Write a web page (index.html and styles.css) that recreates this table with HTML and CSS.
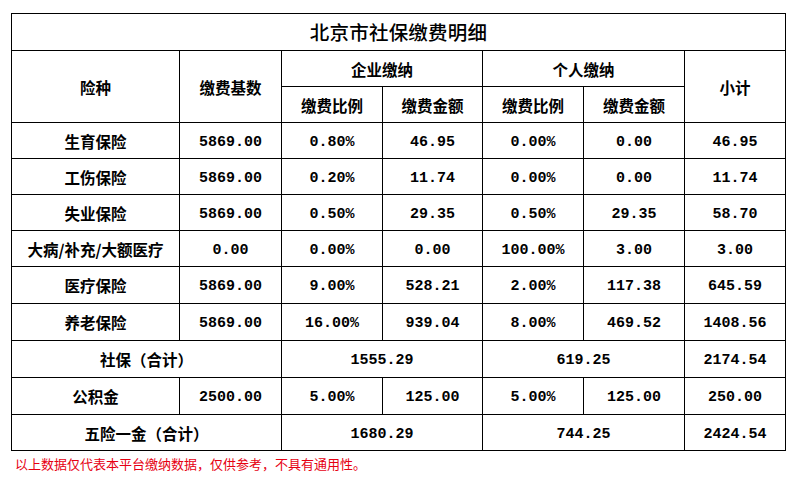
FILE: index.html
```html
<!DOCTYPE html>
<html lang="zh-CN">
<head>
<meta charset="utf-8">
<title>北京市社保缴费明细</title>
<link rel="stylesheet" href="styles.css">
</head>
<body>
<div class="page">
  <table class="fee">
    <colgroup>
      <col class="c-name"><col class="c-base"><col class="c-a"><col class="c-b"><col class="c-c"><col class="c-d"><col class="c-e">
    </colgroup>
    <tr class="r-title"><td colspan="7" class="title">北京市社保缴费明细</td></tr>
    <tr class="r-h"><th rowspan="2">险种</th><th rowspan="2">缴费基数</th><th colspan="2">企业缴纳</th><th colspan="2">个人缴纳</th><th rowspan="2">小计</th></tr>
    <tr class="r-h"><th>缴费比例</th><th>缴费金额</th><th>缴费比例</th><th>缴费金额</th></tr>
    <tr class="r36"><th>生育保险</th><td>5869.00</td><td>0.80%</td><td>46.95</td><td>0.00%</td><td>0.00</td><td>46.95</td></tr>
    <tr class="r36"><th>工伤保险</th><td>5869.00</td><td>0.20%</td><td>11.74</td><td>0.00%</td><td>0.00</td><td>11.74</td></tr>
    <tr class="r36"><th>失业保险</th><td>5869.00</td><td>0.50%</td><td>29.35</td><td>0.50%</td><td>29.35</td><td>58.70</td></tr>
    <tr class="r36"><th>大病/补充/大额医疗</th><td>0.00</td><td>0.00%</td><td>0.00</td><td>100.00%</td><td>3.00</td><td>3.00</td></tr>
    <tr class="r37"><th>医疗保险</th><td>5869.00</td><td>9.00%</td><td>528.21</td><td>2.00%</td><td>117.38</td><td>645.59</td></tr>
    <tr class="r37"><th>养老保险</th><td>5869.00</td><td>16.00%</td><td>939.04</td><td>8.00%</td><td>469.52</td><td>1408.56</td></tr>
    <tr class="r37"><th colspan="2">社保（合计）</th><td colspan="2">1555.29</td><td colspan="2">619.25</td><td>2174.54</td></tr>
    <tr class="r37"><th>公积金</th><td>2500.00</td><td>5.00%</td><td>125.00</td><td>5.00%</td><td>125.00</td><td>250.00</td></tr>
    <tr class="r36"><th colspan="2">五险一金（合计）</th><td colspan="2">1680.29</td><td colspan="2">744.25</td><td>2424.54</td></tr>
  </table>
  <p class="note">以上数据仅代表本平台缴纳数据，仅供参考，不具有通用性。</p>
</div>
</body>
</html>
```

FILE: styles.css
```css
html, body {
  margin: 0;
  padding: 0;
  background: #fff;
}
.page {
  padding: 13px 0 0 11px;
  font-family: "Noto Sans CJK SC", "Liberation Sans", sans-serif;
  color: #000;
}
.fee {
  border-collapse: collapse;
  table-layout: fixed;
  width: 775px;
}
.c-name { width: 168px; }
.c-base { width: 102px; }
.c-a { width: 101px; }
.c-b { width: 100px; }
.c-c { width: 101px; }
.c-d { width: 101px; }
.c-e { width: 101px; }
.fee th, .fee td {
  border: 1px solid #000;
  padding: 0;
  text-align: center;
  vertical-align: middle;
  white-space: nowrap;
}
.fee th {
  font-family: "Noto Sans CJK SC", sans-serif;
  font-size: 15.5px;
  font-weight: 700;
  line-height: 18px;
}
.fee td {
  font-family: "Liberation Mono", "Noto Sans CJK SC", monospace;
  font-size: 15px;
  font-weight: 700;
  line-height: 18px;
  padding-top: 4px;
}
.fee td.title {
  font-family: "Noto Sans CJK SC", sans-serif;
  font-size: 19.5px;
  font-weight: 500;
  letter-spacing: 0.2px;
  padding-top: 0;
}
.r-title { height: 37px; }
.r-h { height: 36px; }
.r36 { height: 36px; }
.r37 { height: 37px; }
.note {
  margin: 5px 0 0 4px;
  font-size: 13px;
  line-height: 16px;
  color: #e60012;
}
```
